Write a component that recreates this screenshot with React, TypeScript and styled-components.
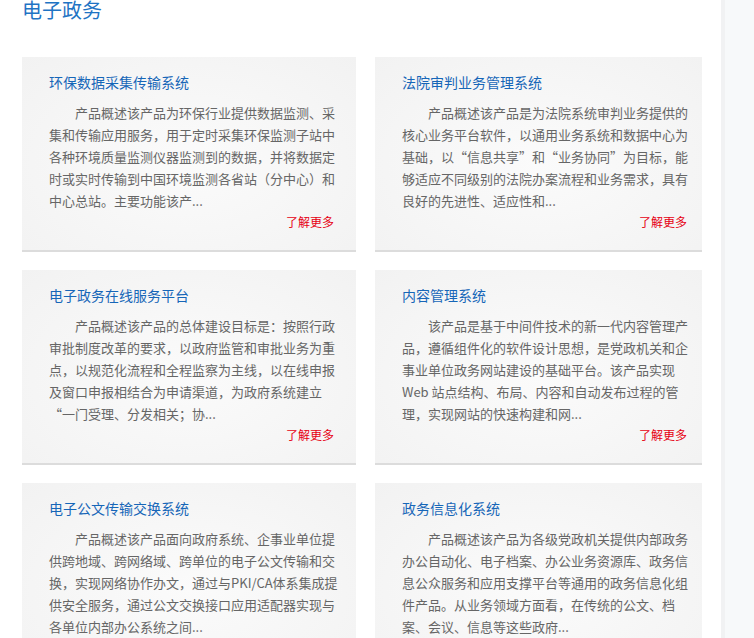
import React from "react";
import styled, { createGlobalStyle } from "styled-components";

const Global = createGlobalStyle`
  html, body { margin: 0; padding: 0; background: #fff; }
  body { font-family: "Noto Sans CJK SC", "Noto Sans", sans-serif; }
  * { box-sizing: border-box; }
`;

const Page = styled.div`
  display: flex;
  width: 754px;
  height: 638px;
  overflow: hidden;
`;

const Main = styled.main`
  width: 721px;
  flex: none;
  padding-left: 22px;
`;

const Side = styled.aside`
  flex: 1;
  background: #f7f9fa;
  border-left: 4px solid #f1f2f3;
`;

const Heading = styled.h2`
  margin: 0;
  font-size: 20px;
  line-height: 20px;
  font-weight: normal;
  color: #1f74c4;
`;

const Grid = styled.div`
  display: grid;
  grid-template-columns: 334px 327px;
  column-gap: 19px;
  row-gap: 18px;
  margin-top: 37px;
`;

const Card = styled.div`
  height: 195px;
  padding: 15px 0 0 27px;
  background: radial-gradient(ellipse at 50% 55%, #fbfbfb 0%, #f6f6f6 55%, #f2f2f2 100%);
  border-bottom: 2px solid #dcdcdc;
`;

const Inner = styled.div`
  width: 290px;
`;

const Title = styled.h3`
  margin: 0;
  font-size: 14px;
  line-height: 20px;
  font-weight: normal;
  color: #1666b8;
`;

const Body = styled.p`
  margin: 10px 0 0;
  font-size: 13px;
  line-height: 22px;
  height: 110px;
  color: #666;
  text-indent: 2em;
  text-align: left;
`;

const More = styled.a`
  display: block;
  text-align: right;
  padding-right: 5px;
  font-size: 12px;
  line-height: 20px;
  color: #e60012;
  text-decoration: none;
`;

const items = [
  {
    title: "环保数据采集传输系统",
    text: "产品概述该产品为环保行业提供数据监测、采集和传输应用服务，用于定时采集环保监测子站中各种环境质量监测仪器监测到的数据，并将数据定时或实时传输到中国环境监测各省站（分中心）和中心总站。主要功能该产...",
  },
  {
    title: "法院审判业务管理系统",
    text: "产品概述该产品是为法院系统审判业务提供的核心业务平台软件，以通用业务系统和数据中心为基础，以“信息共享”和“业务协同”为目标，能够适应不同级别的法院办案流程和业务需求，具有良好的先进性、适应性和...",
  },
  {
    title: "电子政务在线服务平台",
    text: "产品概述该产品的总体建设目标是：按照行政审批制度改革的要求，以政府监管和审批业务为重点，以规范化流程和全程监察为主线，以在线申报及窗口申报相结合为申请渠道，为政府系统建立\u200B“一门受理、分发相关；协...",
  },
  {
    title: "内容管理系统",
    text: "该产品是基于中间件技术的新一代内容管理产品，遵循组件化的软件设计思想，是党政机关和企事业单位政务网站建设的基础平台。该产品实现Web 站点结构、布局、内容和自动发布过程的管理，实现网站的快速构建和网...",
  },
  {
    title: "电子公文传输交换系统",
    text: "产品概述该产品面向政府系统、企事业单位提供跨地域、跨网络域、跨单位的电子公文传输和交换，实现网络协作办文，通过与PKI/CA体系集成提供安全服务，通过公文交换接口应用适配器实现与各单位内部办公系统之间...",
  },
  {
    title: "政务信息化系统",
    text: "产品概述该产品为各级党政机关提供内部政务办公自动化、电子档案、办公业务资源库、政务信息公众服务和应用支撑平台等通用的政务信息化组件产品。从业务领域方面看，在传统的公文、档案、会议、信息等这些政府...",
  },
];

export default function App() {
  return (
    <Page>
      <Global />
      <Main>
        <Heading>电子政务</Heading>
        <Grid>
          {items.map((it) => (
            <Card key={it.title}>
              <Inner>
                <Title>{it.title}</Title>
                <Body>{it.text}</Body>
                <More href="#">了解更多</More>
              </Inner>
            </Card>
          ))}
        </Grid>
      </Main>
      <Side />
    </Page>
  );
}
